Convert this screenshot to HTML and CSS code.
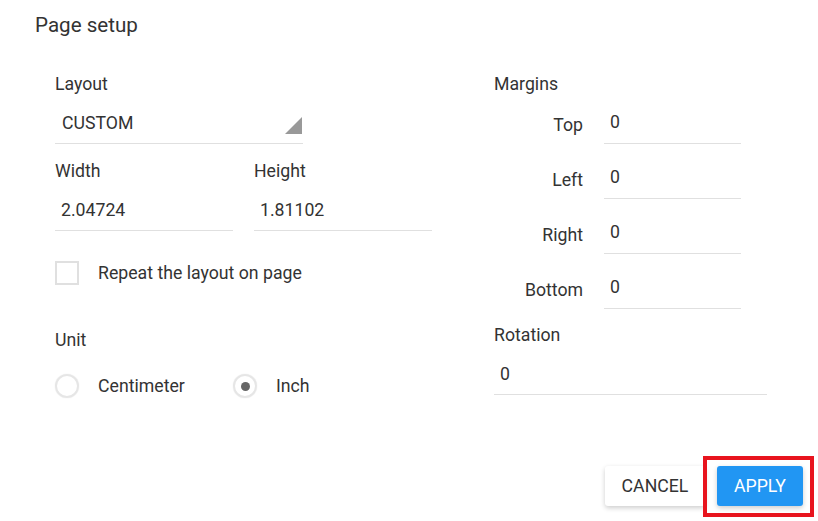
FILE: index.html
```html
<!DOCTYPE html>
<html lang="en">
<head>
    <meta charset="UTF-8">
    <title>Page setup</title>
    <link rel="stylesheet" href="styles.css">
</head>
<body>
    <div class="dialog">
        <h2 class="dialog-title">Page setup</h2>

        <div class="dialog-body">
            <div class="col-left">
                <div class="field">
                    <label class="field-label">Layout</label>
                    <div class="select">
                        <span>CUSTOM</span>
                        <span class="select-arrow"></span>
                    </div>
                </div>

                <div class="size-row">
                    <div class="field size-field">
                        <label class="field-label">Width</label>
                        <div class="input">2.04724</div>
                    </div>
                    <div class="field size-field">
                        <label class="field-label">Height</label>
                        <div class="input">1.81102</div>
                    </div>
                </div>

                <div class="check-row">
                    <span class="checkbox"></span>
                    <span>Repeat the layout on page</span>
                </div>

                <div class="field unit-field">
                    <label class="field-label">Unit</label>
                    <div class="radio-row">
                        <div class="radio-option radio-cm">
                            <span class="radio"></span>
                            <span>Centimeter</span>
                        </div>
                        <div class="radio-option">
                            <span class="radio checked"></span>
                            <span>Inch</span>
                        </div>
                    </div>
                </div>
            </div>

            <div class="col-right">
                <label class="field-label">Margins</label>
                <div class="margin-list">
                    <div class="margin-row">
                        <span class="margin-label">Top</span>
                        <div class="input margin-input">0</div>
                    </div>
                    <div class="margin-row">
                        <span class="margin-label">Left</span>
                        <div class="input margin-input">0</div>
                    </div>
                    <div class="margin-row">
                        <span class="margin-label">Right</span>
                        <div class="input margin-input">0</div>
                    </div>
                    <div class="margin-row">
                        <span class="margin-label">Bottom</span>
                        <div class="input margin-input">0</div>
                    </div>
                </div>

                <div class="field rotation-field">
                    <label class="field-label">Rotation</label>
                    <div class="input">0</div>
                </div>
            </div>
        </div>

        <div class="dialog-actions">
            <button class="btn btn-cancel">CANCEL</button>
            <span class="apply-wrap">
                <button class="btn btn-apply">APPLY</button>
                <!-- highlight frame drawn over the button -->
                <span class="highlight"></span>
            </span>
        </div>
    </div>
</body>
</html>
```

FILE: styles.css
```css
body {
    margin: 0;
    background: #fff;
    font-family: Roboto, "Liberation Sans", sans-serif;
    font-size: 17.7px;
    color: #333;
}
.dialog {
    width: 818px;
    height: 521px;
}
.dialog-title {
    margin: 0;
    padding: 13px 0 0 35px;
    font-size: 20.6px;
    font-weight: normal;
    line-height: 24px;
    color: #333;
}
.dialog-body {
    display: flex;
    gap: 62px;
    padding: 36px 0 0 55px;
}
.col-left {
    width: 377px;
}
.col-right {
    width: 273px;
}
.field {
    display: flex;
    flex-direction: column;
}
.field-label {
    display: block;
    line-height: 20px;
    padding-top: 1px;
    margin-bottom: 9px;
}
.select,
.input {
    height: 40px;
    line-height: 41px;
    padding-left: 6px;
    border-bottom: 1px solid #e0e0e0;
    box-sizing: content-box;
}
.select {
    width: 241px;
    padding-left: 7px;
    display: flex;
    justify-content: space-between;
    align-items: center;
}
.select-arrow {
    width: 0;
    height: 0;
    border-left: 17px solid transparent;
    border-bottom: 17px solid #999;
    margin-top: 4px;
    margin-right: 1px;
}
.size-row {
    display: flex;
    gap: 21px;
    margin-top: 16px;
}
.size-field {
    width: 178px;
}
.check-row {
    display: flex;
    align-items: center;
    gap: 19px;
    margin-top: 30px;
    height: 24px;
}
.checkbox {
    width: 20px;
    height: 20px;
    border: 2px solid #e0e0e0;
}
.unit-field {
    margin-top: 44px;
}
.field-label + .radio-row {
    margin-top: 15px;
}
.radio-row {
    display: flex;
}
.radio-option {
    display: flex;
    align-items: center;
    gap: 19px;
}
.radio-cm {
    width: 178px;
}
.radio {
    width: 20px;
    height: 20px;
    border: 2px solid #e6e6e6;
    border-radius: 50%;
    box-shadow: 0 0 1px rgba(0,0,0,0.15);
    display: flex;
    align-items: center;
    justify-content: center;
}
.radio.checked::after {
    content: "";
    width: 9px;
    height: 9px;
    border-radius: 50%;
    background: #666;
}
.margin-list {
    display: flex;
    flex-direction: column;
    gap: 14px;
}
.margin-row {
    display: flex;
    align-items: center;
    gap: 21px;
}
.margin-label {
    width: 89px;
    text-align: right;
    padding-top: 3px;
}
.margin-input {
    width: 131px;
    line-height: 39px;
}
.rotation-field {
    margin-top: 15px;
}
.dialog-actions {
    display: flex;
    justify-content: flex-end;
    align-items: center;
    gap: 12px;
    margin-top: 68px;
    padding-right: 15px;
}
.btn {
    font-family: Roboto, "Liberation Sans", sans-serif;
    font-size: 17.7px;
    height: 40px;
    border: none;
    border-radius: 3px;
    cursor: pointer;
    box-shadow: 0 2px 5px rgba(0,0,0,0.2);
}
.btn-cancel {
    width: 100px;
    background: #fff;
    color: #333;
}
.btn-apply {
    width: 86px;
    background: #2196f3;
    color: #fff;
    display: block;
}
.apply-wrap {
    position: relative;
    display: block;
}
.highlight {
    position: absolute;
    top: -10px;
    left: -14px;
    right: -11px;
    bottom: -11px;
    border: 4px solid #e8141e;
}
```
